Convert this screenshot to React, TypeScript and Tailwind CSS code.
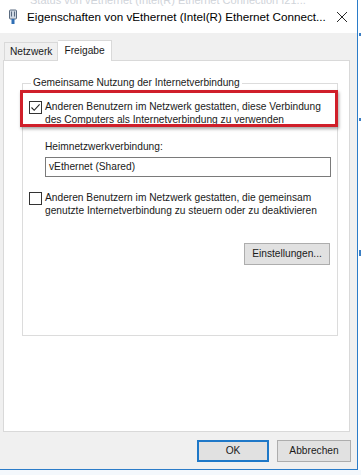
import React from 'react';

function Checkbox({ checked }: { checked?: boolean }) {
    return (
        <span className="w-[13px] h-[13px] border border-[#333333] bg-white flex items-center justify-center shrink-0">
            {checked && (
                <svg viewBox="0 0 11 11" className="w-[11px] h-[11px]" aria-hidden="true">
                    <path d="M1.5 5.5 L4.2 8.3 L9.6 2.4" fill="none" stroke="#222" strokeWidth="1.1" />
                </svg>
            )}
        </span>
    );
}

function NetIcon() {
    return (
        <svg viewBox="0 0 10 16" className="w-[10px] h-[16px]" aria-hidden="true">
            <rect x="1.5" y="1" width="7" height="9" rx="1" fill="#cfd8e3" stroke="#5a6b80" />
            <rect x="3" y="2.5" width="1" height="5" fill="#5a6b80" />
            <rect x="6" y="2.5" width="1" height="5" fill="#5a6b80" />
            <rect x="3.5" y="10" width="3" height="5" fill="#2f6fb5" />
        </svg>
    );
}

export default function App() {
    return (
        <div
            className="w-[361px] h-[475px] bg-white overflow-hidden text-[10.2px] text-[#1a1a1a] flex flex-col"
            style={{ fontFamily: '"Liberation Sans", Arial, sans-serif' }}
        >
            <div className="flex h-[470px]">
                <div className="w-[358px] flex flex-col border-r border-b border-[#2b7cc9]">
                    {/* title bar */}
                    <div className="h-[33px] bg-white relative flex items-center overflow-hidden">
                        <span className="absolute left-[30px] -top-[8px] text-[#d0d4da] text-[11px] whitespace-nowrap">
                            Status von vEthernet (Intel(R) Ethernet Connection I21...
                        </span>
                        <span className="ml-[8px] mt-[1px]">
                            <NetIcon />
                        </span>
                        <span className="ml-[9px] text-[11.7px] text-black whitespace-nowrap">
                            Eigenschaften von vEthernet (Intel(R) Ethernet Connect...
                        </span>
                        <svg viewBox="0 0 10 10" className="w-[10px] h-[10px] ml-auto mr-[10px]" aria-hidden="true">
                            <path d="M0 0 L10 10 M10 0 L0 10" stroke="#111" strokeWidth="0.9" />
                        </svg>
                    </div>

                    {/* body */}
                    <div className="flex-1 bg-[#f0f0f0] flex flex-col pl-[3px] pr-[7px] pt-[7px]">
                        <div className="flex items-end h-[20px] pl-[1px]">
                            <div className="h-[18px] px-[5px] flex items-center border border-b-0 border-[#d9d9d9] bg-[#f0f0f0]">
                                Netzwerk
                            </div>
                            <div className="h-[21px] -mb-[1px] px-[6px] flex items-center border border-b-0 border-l-0 border-[#d9d9d9] bg-white relative z-10">
                                Freigabe
                            </div>
                        </div>
                        <div className="h-[372px] bg-white border border-[#d9d9d9] pl-[18px] pr-[11px]">
                            <fieldset className="relative mt-[15px] h-[260px] border border-[#dcdcdc] pl-[6px] pr-[6px]">
                                <legend className="ml-[2px] px-[2px] leading-[14px]">
                                    Gemeinsame Nutzung der Internetverbindung
                                </legend>
                                <div className="absolute -left-[3px] -right-[1px] top-[0px] h-[37px] border-[3px] border-[#d01f2a] shadow-[1px_2px_3px_rgba(0,0,0,0.35)]" />
                                <div className="flex items-start gap-[3px] mt-[10px] -mr-[6px]">
                                    <span className="mt-[1px]">
                                        <Checkbox checked />
                                    </span>
                                    <span className="leading-[13px]">
                                        Anderen Benutzern im Netzwerk gestatten, diese Verbindung des Computers als Internetverbindung zu verwenden
                                    </span>
                                </div>
                                <div className="pl-[16px] mt-[14px]">
                                    <div className="leading-[14px]">Heimnetzwerkverbindung:</div>
                                    <div className="mt-[3px] h-[20px] border border-[#7a7a7a] bg-white flex items-center pl-[3px]">
                                        vEthernet (Shared)
                                    </div>
                                </div>
                                <div className="flex items-start gap-[3px] mt-[14px] -mr-[6px]">
                                    <span className="mt-[1px]">
                                        <Checkbox />
                                    </span>
                                    <span className="leading-[13px]">
                                        Anderen Benutzern im Netzwerk gestatten, die gemeinsam genutzte Internetverbindung zu steuern oder zu deaktivieren
                                    </span>
                                </div>
                                <div className="flex justify-end mt-[26px] pr-[1px]">
                                    <button type="button" className="h-[22px] w-[86px] border border-[#adadad] bg-[#e1e1e1]">
                                        Einstellungen...
                                    </button>
                                </div>
                            </fieldset>
                        </div>
                        <div className="flex justify-end gap-[8px] mt-[8px] -mr-[1px]">
                            <button type="button" className="h-[22px] w-[72px] border-2 border-[#1e78c8] bg-[#e1e1e1]">
                                OK
                            </button>
                            <button type="button" className="h-[22px] w-[74px] border border-[#adadad] bg-[#e1e1e1]">
                                Abbrechen
                            </button>
                        </div>
                    </div>
                </div>
                <div className="flex-1 bg-white relative">
                    <div className="absolute left-[1px] top-[33px] w-[2px] h-[3px] bg-[#3b7fc4]" />
                    <div className="absolute left-[1px] top-[118px] w-[2px] h-[3px] bg-[#3b7fc4]" />
                    <div className="absolute left-[1px] top-[250px] w-[2px] h-[6px] bg-[#3b7fc4]" />
                </div>
            </div>
            <div className="flex-1 bg-[#f4f8fc]" />
        </div>
    );
}
